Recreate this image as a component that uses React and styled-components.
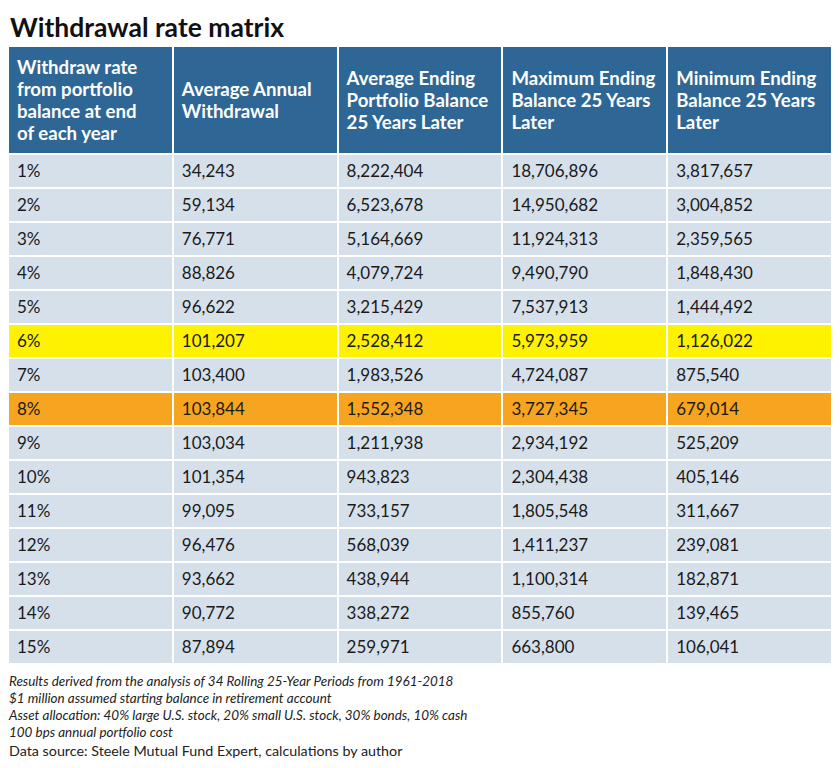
import React from 'react';
import styled, { createGlobalStyle } from 'styled-components';

const Global = createGlobalStyle`
  body {
    margin: 0;
    background: #fff;
    font-family: Lato, "Liberation Sans", sans-serif;
    color: #1a1a1a;
  }
`;

const Page = styled.div`
  width: 840px;
  padding: 12px 9px 0 9px;
  box-sizing: border-box;
`;

const Title = styled.h1`
  margin: 0 0 5px 1px;
  font-size: 26.5px;
  font-weight: 700;
  line-height: 30px;
  color: #111;
`;

const Grid = styled.div`
  display: grid;
  grid-template-columns: repeat(5, 1fr);
  gap: 2px;
  width: 822px;
`;

const Head = styled.div`
  background: #2e6795;
  color: #fff;
  font-size: 18.6px;
  font-weight: 700;
  line-height: 22px;
  padding: 9px 3px 9px 8px;
  height: 106px;
  box-sizing: border-box;
  display: flex;
  align-items: center;
`;

const bg = { yellow: '#fff200', orange: '#f7a520' };

const Cell = styled.div`
  background: ${(p) => bg[p.$tone] || '#d6e0ea'};
  font-size: 17px;
  height: 32px;
  line-height: 32px;
  padding: 0 8px;
  color: #1a1a1a;
`;

const Notes = styled.div`
  margin-top: 10px;
  font-size: 13.45px;
  line-height: 17px;
  font-style: italic;
  color: #222;
`;

const Source = styled.div`
  margin-top: 1px;
  font-size: 14.3px;
  line-height: 17px;
  color: #222;
`;

const heads = [
  ['Withdraw rate', 'from portfolio', 'balance at end', 'of each year'],
  ['Average Annual', 'Withdrawal'],
  ['Average Ending', 'Portfolio Balance', '25 Years Later'],
  ['Maximum Ending', 'Balance 25 Years', 'Later'],
  ['Minimum Ending', 'Balance 25 Years', 'Later'],
];

const rows = [
  ['1%', '34,243', '8,222,404', '18,706,896', '3,817,657'],
  ['2%', '59,134', '6,523,678', '14,950,682', '3,004,852'],
  ['3%', '76,771', '5,164,669', '11,924,313', '2,359,565'],
  ['4%', '88,826', '4,079,724', '9,490,790', '1,848,430'],
  ['5%', '96,622', '3,215,429', '7,537,913', '1,444,492'],
  ['6%', '101,207', '2,528,412', '5,973,959', '1,126,022', 'yellow'],
  ['7%', '103,400', '1,983,526', '4,724,087', '875,540'],
  ['8%', '103,844', '1,552,348', '3,727,345', '679,014', 'orange'],
  ['9%', '103,034', '1,211,938', '2,934,192', '525,209'],
  ['10%', '101,354', '943,823', '2,304,438', '405,146'],
  ['11%', '99,095', '733,157', '1,805,548', '311,667'],
  ['12%', '96,476', '568,039', '1,411,237', '239,081'],
  ['13%', '93,662', '438,944', '1,100,314', '182,871'],
  ['14%', '90,772', '338,272', '855,760', '139,465'],
  ['15%', '87,894', '259,971', '663,800', '106,041'],
];

const App = () => {
  return (
    <Page>
      <Global />
      <Title>Withdrawal rate matrix</Title>
      <Grid>
        {heads.map((lines) => (
          <Head key={lines[0]}>
            <span>
              {lines.map((l, i) => (
                <React.Fragment key={l}>
                  {i > 0 && <br />}
                  {l}
                </React.Fragment>
              ))}
            </span>
          </Head>
        ))}
        {rows.map((r) =>
          r.slice(0, 5).map((v, i) => (
            <Cell key={r[0] + i} $tone={r[5]}>
              {v}
            </Cell>
          ))
        )}
      </Grid>
      <Notes>
        Results derived from the analysis of 34 Rolling 25-Year Periods from 1961-2018
        <br />
        $1 million assumed starting balance in retirement account
        <br />
        Asset allocation: 40% large U.S. stock, 20% small U.S. stock, 30% bonds, 10% cash
        <br />
        100 bps annual portfolio cost
      </Notes>
      <Source>Data source: Steele Mutual Fund Expert, calculations by author</Source>
    </Page>
  );
};

export default App;
